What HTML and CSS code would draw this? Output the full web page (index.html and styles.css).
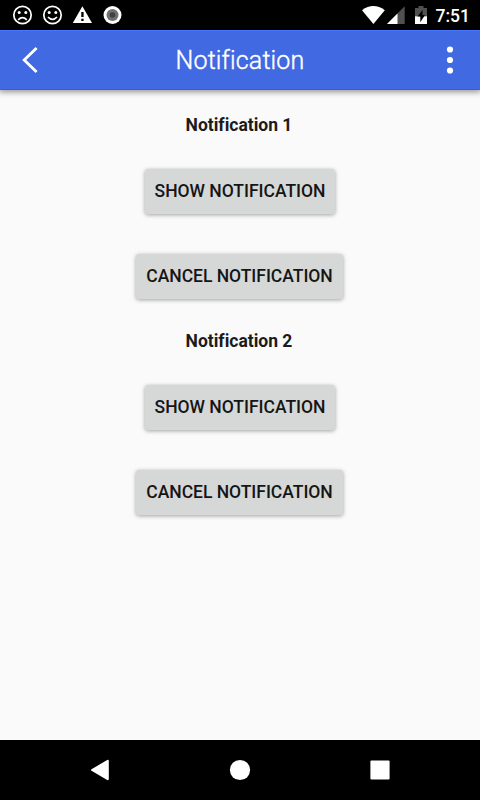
FILE: index.html
```html
<!DOCTYPE html>
<html lang="en">
<head>
<meta charset="utf-8">
<title>Notification</title>
<link rel="stylesheet" href="styles.css">
</head>
<body>
<div class="screen">
  <div class="status">
    <svg class="status-left" width="130" height="30" viewBox="0 0 130 30">
      <g fill="none" stroke="#fff" stroke-width="1.7">
        <circle cx="22.5" cy="15" r="8.7"/><circle cx="52.5" cy="15" r="8.7"/>
        <path d="M18.2 19.8Q22.5 15.6 26.8 19.8M48 17Q52.5 21.8 57 17"/>
      </g>
      <g fill="#fff">
        <circle cx="19.2" cy="12.6" r="1.5"/><circle cx="25.8" cy="12.6" r="1.5"/>
        <circle cx="49.2" cy="12.6" r="1.5"/><circle cx="55.8" cy="12.6" r="1.5"/>
        <path d="M82.4 6.2L92 23H72.8z"/>
      </g>
      <path d="M81.3 12h2.3v5h-2.3zM81.3 18.8h2.3v2.2h-2.3z" fill="#000"/>
      <circle cx="112.5" cy="15" r="9" fill="#fff"/>
      <circle cx="112.5" cy="15" r="6" fill="#707070"/>
      <circle cx="112.5" cy="15" r="2.8" fill="#404040"/>
    </svg>
    <div class="status-right">
      <svg width="70" height="30" viewBox="360 0 70 30">
        <path d="M362 10.2Q373.4 2 384.8 10.2L373.4 24z" fill="#fff"/>
        <path d="M404.7 6.3V24H387z" fill="#505050"/>
        <path d="M397.5 13.5V24H387z" fill="#fff"/>
        <path d="M415 8h3.5V6h5v2h3.5v8.5h-12z" fill="#505050"/>
        <path d="M415 16.3h12V24h-12z" fill="#fff"/>
        <path d="M422.5 10l-5 6.4h2.8v5.8l4.7-7.2h-2.5z" fill="#000"/>
      </svg>
      <span class="time">7:51</span>
    </div>
  </div>
  <header class="bar">
    <svg width="60" height="60" viewBox="0 0 60 60"><path d="M36.6 18L24.2 30l12.4 12" fill="none" stroke="#fff" stroke-width="2.8"/></svg>
    <h1>Notification</h1>
    <svg width="60" height="60" viewBox="0 0 60 60" fill="#fff"><circle cx="30" cy="19.5" r="3.1"/><circle cx="30" cy="30" r="3.1"/><circle cx="30" cy="40.5" r="3.1"/></svg>
  </header>
  <main>
    <section>
      <h2>Notification 1</h2>
      <button class="show">SHOW NOTIFICATION</button>
      <button class="cancel">CANCEL NOTIFICATION</button>
    </section>
    <section>
      <h2>Notification 2</h2>
      <button class="show">SHOW NOTIFICATION</button>
      <button class="cancel">CANCEL NOTIFICATION</button>
    </section>
  </main>
  <nav>
    <svg width="480" height="60" viewBox="0 0 480 60" fill="#fff">
      <path d="M91.5 29.2L107.2 20q1.6-.6 1.6 1V39q0 1.6-1.6 1L91.5 30.8q-1-.8 0-1.6z"/>
      <circle cx="240" cy="30" r="10.1"/>
      <rect x="370.4" y="20.4" width="19.2" height="19.2" rx="1"/>
    </svg>
  </nav>
</div>
</body>
</html>
```
FILE: styles.css
```css
* { box-sizing: border-box; }
body { margin: 0; font-family: Roboto, sans-serif; color: #1b1b1b; font-variant-ligatures: none; }
.screen { width: 480px; height: 800px; display: flex; flex-direction: column; background: #fafafa; overflow: hidden; }
svg { display: block; }
.status { height: 30px; background: #000; display: flex; justify-content: space-between; }
.status-right { display: flex; width: 120px; color: #fff; }
.time { padding-left: 5.5px; font-size: 17.5px; font-weight: 500; line-height: 32px; white-space: nowrap; }
.bar { height: 60px; background: #4169e1; border-top: 1px solid #4876ff; border-bottom: 1px solid #3a5fca; display: flex; align-items: center; justify-content: space-between; box-shadow: 0 1px 6px 1px rgba(0,0,0,.42); }
h1 { margin: 0; font-size: 25px; font-weight: 300; letter-spacing: .15px; line-height: 58px; padding-top: 2px; color: #fff; white-space: nowrap; -webkit-text-stroke: .4px #fff; }
main { flex: 1; padding-top: 20px; }
section { height: 216px; display: flex; flex-direction: column; align-items: center; }
h2 { margin: 0 2px 28px 0; font-size: 17.5px; font-weight: 700; line-height: 31px; }
button { height: 45px; margin: 0 0 40px; padding: 0; border: 0; border-radius: 3px; background: #d6d8d7; color: #151515; font: 500 17.5px/45px Roboto, sans-serif; letter-spacing: -.02px; box-shadow: 0 1px 4px rgba(0,0,0,.36); flex: none; white-space: nowrap; }
.show { width: 190px; }
.cancel { width: 207px; margin-right: 1px; }
nav { height: 60px; background: #000; }
```
